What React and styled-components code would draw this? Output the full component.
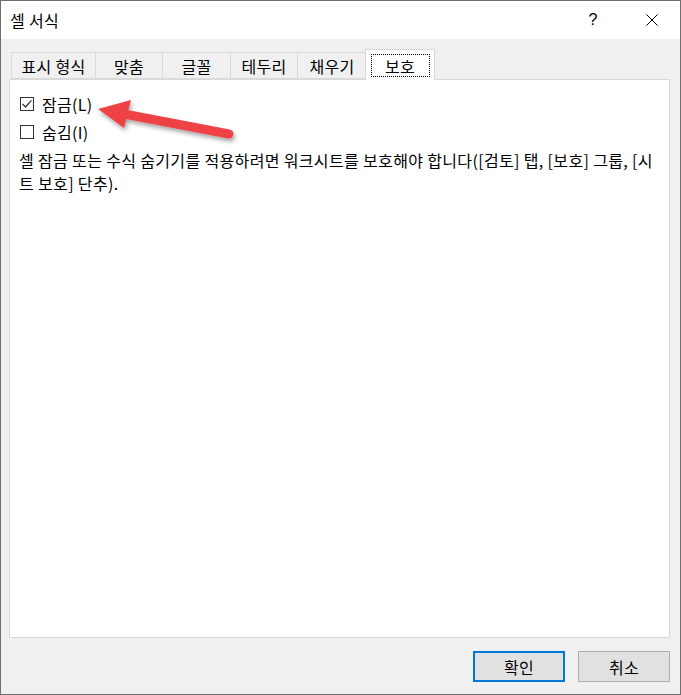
import React from 'react';
import styled, { createGlobalStyle } from 'styled-components';

const GlobalStyle = createGlobalStyle`
  html, body {
    margin: 0;
    padding: 0;
    background: #ffffff;
  }
  body {
    font-family: "Noto Sans CJK KR", "Noto Sans", sans-serif;
    color: #000;
  }
`;

const Window = styled.div`
  position: relative;
  width: 681px;
  height: 695px;
  box-sizing: border-box;
  border: 1px solid #6f6f6f;
  background: #f0f0f0;
  display: flex;
  flex-direction: column;
`;

const TitleBar = styled.div`
  height: 38px;
  background: #ffffff;
  display: flex;
  align-items: center;
  padding-left: 9px;
`;

const Title = styled.div`
  font-size: 16px;
  line-height: 20px;
  letter-spacing: 0.3px;
`;

const TitleActions = styled.div`
  margin-left: auto;
  display: flex;
  gap: 19px;
  padding-right: 8px;
`;

const TitleButton = styled.div`
  width: 40px;
  height: 38px;
  display: flex;
  align-items: center;
  justify-content: center;
  font-family: "Liberation Sans", sans-serif;
  font-size: 16px;
`;

const Body = styled.div`
  flex: 1;
  display: flex;
  flex-direction: column;
  padding: 10px 10px 12px 8px;
`;

const TabStrip = styled.div`
  display: flex;
  align-items: flex-end;
  height: 30px;
  padding-left: 2px;
  position: relative;
  z-index: 1;
`;

const Tab = styled.div`
  width: ${p => p.$w}px;
  height: ${p => (p.$active ? 31 : 27)}px;
  box-sizing: border-box;
  border: 1px solid #d9d9d9;
  border-bottom: ${p => (p.$active ? 'none' : '1px solid #d9d9d9')};
  border-left: ${p => (p.$first || p.$active ? '1px solid #d9d9d9' : 'none')};
  margin: ${p => (p.$active ? '0 0 -1px -2px' : '0')};
  background: ${p => (p.$active ? '#ffffff' : '#f0f0f0')};
  display: flex;
  align-items: ${p => (p.$active ? 'flex-start' : 'center')};
  justify-content: center;
  padding-top: ${p => (p.$active ? '4px' : '0')};
  font-size: 16px;
  line-height: 20px;
  letter-spacing: 0.3px;
`;

const FocusRect = styled.span`
  display: flex;
  align-items: center;
  justify-content: center;
  width: 59px;
  height: 23px;
  box-sizing: border-box;
  border: 1px dotted #000;
`;

const Panel = styled.div`
  flex: 1;
  background: #ffffff;
  border: 1px solid #d9d9d9;
  padding: 10px 10px 0 9px;
  display: flex;
  flex-direction: column;
`;

const CheckRow = styled.label`
  height: 28px;
  display: flex;
  align-items: center;
  gap: 8px;
  font-size: 16px;
  line-height: 20px;
  letter-spacing: 0.3px;
`;

const Box = styled.span`
  width: 14px;
  height: 14px;
  box-sizing: border-box;
  border: 1px solid #333333;
  background: #ffffff;
  display: flex;
  align-items: center;
  justify-content: center;
  margin-left: 1px;
`;

const Description = styled.div`
  margin-top: 3px;
  font-size: 16px;
  line-height: 23px;
  letter-spacing: 0.35px;
  white-space: nowrap;
`;

const Footer = styled.div`
  margin-top: 13px;
  display: flex;
  justify-content: flex-end;
  gap: 13px;
`;

const Button = styled.button`
  width: 92px;
  height: 31px;
  box-sizing: border-box;
  background: #e1e1e1;
  border: ${p => (p.$default ? '2px solid #0078d7' : '1px solid #adadad')};
  font-family: "Noto Sans CJK KR", sans-serif;
  font-size: 16px;
  line-height: 20px;
  letter-spacing: 0.3px;
  color: #000;
  padding: 0;
`;

const Overlay = styled.svg`
  position: absolute;
  left: -1px;
  top: -1px;
  pointer-events: none;
`;

function CheckBox({ checked }) {
  return (
    <Box>
      {checked && (
        <svg width="12" height="12" viewBox="0 0 12 12">
          <path d="M1.6 6 L4.6 9 L10.4 2.4" fill="none" stroke="#333" strokeWidth="1.3" />
        </svg>
      )}
    </Box>
  );
}

const tabs = [
  { label: '표시 형식', w: 85, first: true },
  { label: '맞춤', w: 67 },
  { label: '글꼴', w: 68 },
  { label: '테두리', w: 67 },
  { label: '채우기', w: 69 },
];

export default function App() {
  return (
    <>
      <GlobalStyle />
      <Window>
        <TitleBar>
          <Title>셀 서식</Title>
          <TitleActions>
            <TitleButton>?</TitleButton>
            <TitleButton>
              <svg width="12" height="12" viewBox="0 0 12 12">
                <path d="M0.5 0.5 L11.5 11.5 M11.5 0.5 L0.5 11.5" stroke="#000" strokeWidth="1" />
              </svg>
            </TitleButton>
          </TitleActions>
        </TitleBar>
        <Body>
          <TabStrip>
            {tabs.map(t => (
              <Tab key={t.label} $w={t.w} $first={t.first}>{t.label}</Tab>
            ))}
            <Tab $w={70} $active>
              <FocusRect>보호</FocusRect>
            </Tab>
          </TabStrip>
          <Panel>
            <CheckRow>
              <CheckBox checked />
              <span>잠금(L)</span>
            </CheckRow>
            <CheckRow>
              <CheckBox />
              <span>숨김(I)</span>
            </CheckRow>
            <Description>
              셀 잠금 또는 수식 숨기기를 적용하려면 워크시트를 보호해야 합니다([검토] 탭, [보호] 그룹, [시
              <br />
              트 보호] 단추).
            </Description>
          </Panel>
          <Footer>
            <Button $default>확인</Button>
            <Button>취소</Button>
          </Footer>
        </Body>
        <Overlay width="681" height="695" viewBox="0 0 681 695">
          <defs>
            <filter id="shadow" x="-20%" y="-40%" width="140%" height="180%">
              <feDropShadow dx="1.5" dy="3" stdDeviation="2" floodColor="#000" floodOpacity="0.35" />
            </filter>
          </defs>
          <g filter="url(#shadow)">
            <line x1="124" y1="114" x2="229" y2="134" stroke="#ef4347" strokeWidth="9" strokeLinecap="round" />
            <polygon points="98,109 131,100 124,128" fill="#ef4347" />
          </g>
        </Overlay>
      </Window>
    </>
  );
}
